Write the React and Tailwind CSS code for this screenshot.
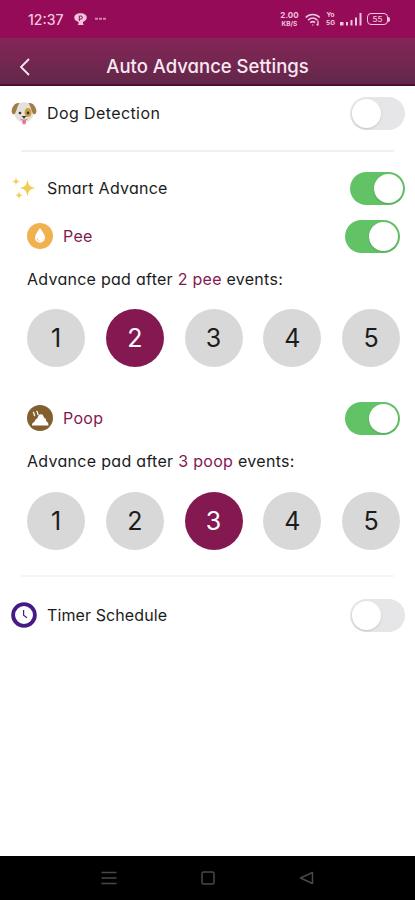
import { useState } from 'react';

function DogIcon() {
  return (
    <svg viewBox="0 0 26 24" className="w-[26px] h-6">
      <path d="M5 4C9 .2 17 .2 21 4c2.300 3 2.300 8 1 11-1.600 4-5 6.500-9 6.500S5.600 19 4 15C2.700 12 2.700 7 5 4z" fill="#e4e0db" />
      <path d="M8.500 2C4.500 1.200 1.500 5 .7 9c-.5 3.200 1 4.800 2.800 4C5.500 11.500 5.500 6.500 8.500 2z" fill="#a07c48" />
      <path d="M17.500 2c4-.8 7 3 7.800 7 .5 3.200-1 4.800-2.800 4-2-1.500-2-6.500-5-11z" fill="#a07c48" />
      <ellipse cx="17" cy="11.500" rx="3.400" ry="4.500" fill="#cf9c45" />
      <circle cx="9" cy="12" r="1.300" fill="#3c3029" />
      <circle cx="17" cy="12" r="1.400" fill="#3c3029" />
      <path d="M10.600 15h4.800l-2.400 2.600z" fill="#332b28" />
      <path d="M9.500 18c1.500 1 2.800.8 3.500-.4.700 1.200 2 1.400 3.500.4" fill="none" stroke="#8d7d76" strokeWidth=".8" />
      <path d="M11.300 19h3.600v2.300a1.800 2.300 0 0 1-3.600 0z" fill="#ef6f96" />
    </svg>
  );
}

function SparklesIcon() {
  return (
    <svg viewBox="0 0 24 24" className="w-6 h-6" fill="#f2cd55">
      <path d="M15.500 3c.9 6 2 8 8 9-6 1-7.100 3-8 9-.9-6-2-8-8-9 6-1 7.100-3 8-9z" />
      <path d="M4 1c.4 3 1 4 4 4.500-3 .5-3.600 1.500-4 4.500C3.600 7 3 6 0 5.500 3 5 3.600 4 4 1z" />
      <path d="M7 15c.4 3 1 3.800 4 4.300-3 .5-3.600 1.400-4 4.400-.4-3-1-3.900-4-4.400 3-.5 3.600-1.300 4-4.300z" />
    </svg>
  );
}

function PeeIcon() {
  return (
    <svg viewBox="0 0 26 26" className="w-[26px] h-[26px]">
      <circle cx="13" cy="13" r="13" fill="#f0b14e" />
      <path d="M13 5c2.200 3.500 5 6.500 5 9.700a5 5 0 0 1-10 0C8 11.500 10.800 8.500 13 5z" fill="#fff" />
      <path d="M10 15a3.200 3.200 0 0 0 2.500 3" fill="none" stroke="#f3c47c" strokeWidth=".9" />
    </svg>
  );
}

function PoopIcon() {
  return (
    <svg viewBox="0 0 26 26" className="w-[26px] h-[26px]">
      <circle cx="13" cy="13" r="13" fill="#835f30" />
      <path d="M5 20.500c-.2-1.800.7-3 2.300-3.600l1.500-2.600 1.300-.7 2-3.800c.6-.9 3-.9 3.600 0l1.600 3.200 1.200.6 1 3c1.600.8 2.100 2.200 1.900 3.900z" fill="#fff" />
      <path d="M6 7c2 1 0 2.500 2 4M9.500 6c2 1 0 2.500 2 4" fill="none" stroke="#fff" strokeWidth="1.300" />
    </svg>
  );
}

function ClockIcon() {
  return (
    <svg viewBox="0 0 26 26" className="w-[26px] h-[26px]" fill="none" stroke="#481a87">
      <circle cx="13" cy="13" r="10.900" strokeWidth="3.800" />
      <path d="M12.600 8v5.300l3.400 2.400" strokeWidth="1.200" />
    </svg>
  );
}

function Toggle({ on, onChange }) {
  return (
    <button
      type="button"
      role="switch"
      aria-checked={on}
      onClick={() => onChange(!on)}
      className={`flex items-center w-[55px] h-[33px] px-[2px] rounded-full ${on ? 'justify-end bg-[#62c266]' : 'justify-start bg-[#e6e6e9]'}`}
    >
      <span className="w-[29px] h-[29px] rounded-full bg-white shadow-[0_1px_2px_rgba(0,0,0,0.15)]" />
    </button>
  );
}

function CountPicker({ value, onChange }) {
  return (
    <div className="flex justify-between pl-[27px] pr-[15px]">
      {[1, 2, 3, 4, 5].map((n) => (
        <button
          key={n}
          type="button"
          onClick={() => onChange(n)}
          className={`w-[58px] h-[58px] pt-[2px] rounded-full text-[25px] ${n === value ? 'bg-[#841851] text-white' : 'bg-[#d8d8d8] text-[#1c1c1c]'}`}
        >
          {n}
        </button>
      ))}
    </div>
  );
}

function StatusBar() {
  return (
    <div className="h-[38px] bg-[#960b57] flex items-center justify-between pl-7 pr-[25px] text-[#efc6dc]">
      <div className="flex items-center">
        <span className="w-[46px] text-[14px] font-medium">12:37</span>
        <svg viewBox="0 0 13 13" className="w-[13px] h-[13px]">
          <path d="M2 1.500C4-.2 9-.2 11 1.500c2.500 1.500 2.200 5 0 6.200L9 9v2l1 1H3.500l1-1V9L2 7.700C-.2 6.500-.5 3 2 1.500z" fill="currentColor" />
          <path d="M5.300 8V3h1.600a1.500 1.500 0 0 1 0 3H5.300" fill="none" stroke="#960b57" />
        </svg>
        <svg viewBox="0 0 11 4" className="w-[11px] h-1 ml-2" fill="currentColor" opacity=".65">
          <path d="M0 .7h3v2H0zM4 .7h3v2H4zM8 .7h3v2H8z" />
        </svg>
      </div>
      <div className="flex items-center">
        <div className="w-[19px] flex flex-col items-center text-[8px] leading-[9px] font-bold">
          <span>2.00</span>
          <span className="text-[6.500px] leading-[8px]">KB/S</span>
        </div>
        <svg viewBox="0 0 16 13" className="w-4 h-[13px] ml-[6px]" fill="none" stroke="currentColor" strokeWidth="1.600">
          <path d="M.7 4.500c4-4 10-4 14 0M3 7.200c3-2.700 6.500-2.700 9.300 0M5.300 9.700c1.500-1.300 3.300-1.300 4.700 0" />
          <path d="M7.700 11.500v1M13 7.500v5M11.700 11l1.300 1.500" strokeWidth="1.300" />
        </svg>
        <div className="ml-[5px] w-[9px] flex flex-col items-center text-[6.500px] leading-[8px] font-bold">
          <span>Yo</span>
          <span>5G</span>
        </div>
        <svg viewBox="0 0 22 13" className="w-[22px] h-[13px] ml-[5px]" fill="currentColor">
          <path d="M0 9h3.500v3.500H0zM6 9h2v3.500H6zM10.500 7h2v5.500h-2zM15 4.500h2v8h-2zM19.500 0h2v12.500h-2z" />
        </svg>
        <div className="ml-[5px] w-[21px] h-3 rounded-[4px] border-[1.500px] border-current text-[8px] leading-none font-medium flex items-center justify-center">
          55
        </div>
        <span className="w-[2px] h-[5px] rounded-r bg-current" />
      </div>
    </div>
  );
}

export default function App() {
  const [dog, setDog] = useState(false);
  const [smart, setSmart] = useState(true);
  const [pee, setPee] = useState(true);
  const [poop, setPoop] = useState(true);
  const [timer, setTimer] = useState(false);
  const [peeCount, setPeeCount] = useState(2);
  const [poopCount, setPoopCount] = useState(3);

  return (
    <div className="w-full h-[900px] flex flex-col bg-white overflow-hidden text-[#1c1c1c] font-[Inter,'Liberation_Sans',sans-serif] [font-feature-settings:'cv11'] whitespace-nowrap">
      <StatusBar />
      <header className="h-12 grid grid-cols-[50px_1fr_50px] items-center pt-[11px] bg-linear-to-b from-[#852558] to-[#622749] border-b-2 border-[#4f0c35] text-[#f8e9f1]">
        <svg viewBox="0 0 12 20" className="w-3 h-5 ml-[19px]" fill="none" stroke="currentColor" strokeWidth="1.800">
          <path d="M10 2 2 10l8 8" />
        </svg>
        <h1 className="text-center text-[18.500px] font-medium">Auto Advance Settings</h1>
      </header>

      <main className="flex-1 text-[16px]">
        <div className="h-[54px] flex items-center pl-[11px] pr-[10px]">
          <DogIcon />
          <span className="flex-1 ml-[10px] tracking-[0.4px]">Dog Detection</span>
          <Toggle on={dog} onChange={setDog} />
        </div>
        <div className="mt-[10px] ml-[21px] mr-[21px] h-[2px] bg-[#f0f0f0]" />

        <div className="mt-[11px] h-[50px] flex items-center pl-3 pr-[10px]">
          <SparklesIcon />
          <span className="flex-1 ml-[11px] tracking-[0.25px]">Smart Advance</span>
          <Toggle on={smart} onChange={setSmart} />
        </div>

        <div className="h-[46px] flex items-center pl-[27px] pr-[15px]">
          <PeeIcon />
          <span className="flex-1 ml-[10px] text-[#841851] tracking-[0.3px]">Pee</span>
          <Toggle on={pee} onChange={setPee} />
        </div>
        <p className="mt-2 h-6 leading-6 pl-[27px] mb-[18px] tracking-[0.27px]">
          Advance pad after <span className="text-[#841851]">{peeCount} pee</span> events:
        </p>
        <CountPicker value={peeCount} onChange={setPeeCount} />

        <div className="mt-[28px] h-[46px] flex items-center pl-[27px] pr-[15px]">
          <PoopIcon />
          <span className="flex-1 ml-[10px] text-[#841851] tracking-[0.3px]">Poop</span>
          <Toggle on={poop} onChange={setPoop} />
        </div>
        <p className="mt-2 h-6 leading-6 pl-[27px] mb-[19px] tracking-[0.3px]">
          Advance pad after <span className="text-[#841851]">{poopCount} poop</span> events:
        </p>
        <CountPicker value={poopCount} onChange={setPoopCount} />

        <div className="mt-[25px] ml-[21px] mr-[21px] h-[2px] bg-[#f5f5f5]" />
        <div className="mt-[13px] h-[50px] flex items-center pl-[11px] pr-[10px]">
          <ClockIcon />
          <span className="flex-1 ml-[10px] tracking-[0.1px]">Timer Schedule</span>
          <Toggle on={timer} onChange={setTimer} />
        </div>
      </main>

      <nav className="h-11 bg-black flex items-center justify-between pl-[101px] pr-[101px] text-[#484848]">
        <svg viewBox="0 0 16 14" className="w-4 h-[14px]" fill="none" stroke="currentColor" strokeWidth="1.500">
          <path d="M.5 1.500h15M.5 7h15M.5 12.500h15" />
        </svg>
        <svg viewBox="0 0 14 14" className="w-[14px] h-[14px]" fill="none" stroke="currentColor" strokeWidth="1.500">
          <rect x="1" y="1" width="12" height="12" rx="1.500" />
        </svg>
        <svg viewBox="0 0 15 14" className="w-[15px] h-[14px]" fill="none" stroke="currentColor" strokeWidth="1.500" strokeLinejoin="round">
          <path d="M13.500 1.500v11L1.500 7z" />
        </svg>
      </nav>
    </div>
  );
}
